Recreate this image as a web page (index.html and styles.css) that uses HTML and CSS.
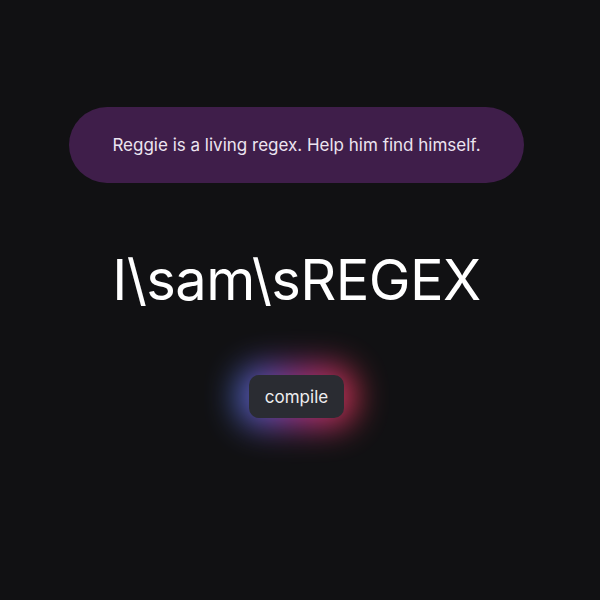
FILE: index.html
```html
<!DOCTYPE html>
<html>
<head>
<meta charset="utf-8">
<link rel="stylesheet" href="styles.css">
</head>
<body>
<main class="app">
  <div class="banner">Reggie is a living regex. Help him find himself.</div>
  <h1 class="title">I\sam\sREGEX</h1>
  <div class="glow-wrap">
    <div class="glow"></div>
    <button class="compile">compile</button>
  </div>
</main>
</body>
</html>
```
FILE: styles.css
```css
html, body {
  margin: 0;
  padding: 0;
  background: #111113;
  height: 100%;
}
body {
  font-family: Inter, "Noto Sans", sans-serif;
  color: #f2f2f4;
}
.app {
  display: flex;
  flex-direction: column;
  align-items: center;
  padding-top: 107px;
  padding-right: 7px;
}
.banner {
  width: 455px;
  height: 76px;
  box-sizing: border-box;
  border-radius: 38px;
  background: #3f1e4a;
  color: #ece4f0;
  font-size: 17px;
  display: flex;
  align-items: center;
  justify-content: center;
}
.title {
  margin: 62px 0 0;
  font-size: 56px;
  font-weight: 400;
  line-height: 70px;
  letter-spacing: -0.6px;
  color: #ffffff;
}
.glow-wrap {
  position: relative;
  margin-top: 60px;
}
.glow {
  position: absolute;
  left: -12px;
  right: -12px;
  top: -10px;
  bottom: -10px;
  border-radius: 26px;
  background: linear-gradient(90deg, #4a7ee0 0%, #6a50c0 25%, #b0358a 55%, #e8364a 100%);
  filter: blur(16px);
  opacity: 0.9;
}
.compile {
  position: relative;
  display: block;
  width: 95px;
  height: 43px;
  border: none;
  border-radius: 10px;
  background: #2a2c32;
  color: #eeeef0;
  font-family: Inter, "Noto Sans", sans-serif;
  font-size: 17px;
  padding: 0;
}
```
